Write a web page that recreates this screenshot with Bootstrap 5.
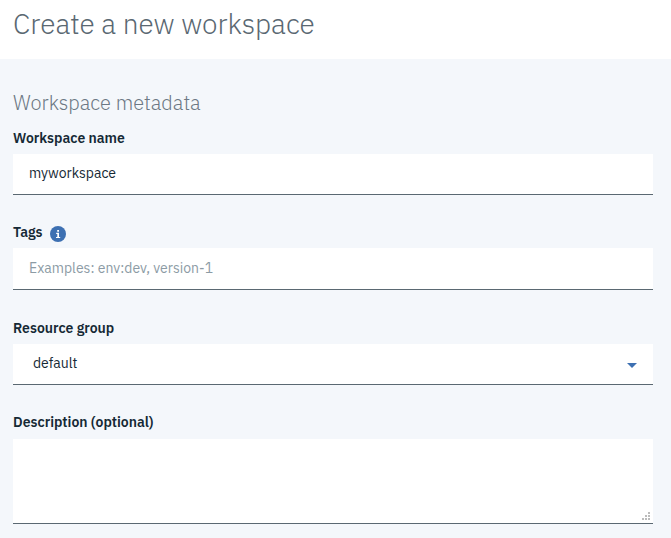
<!DOCTYPE html>
<html lang="en">
<head>
<meta charset="utf-8">
<meta name="viewport" content="width=device-width, initial-scale=1">
<title>Create a new workspace</title>
<link href="https://cdn.jsdelivr.net/npm/bootstrap@5.3.0/dist/css/bootstrap.min.css" rel="stylesheet">
<style>
body{font-family:"IBM Plex Sans",Roboto,"Liberation Sans",sans-serif;font-size:14px;color:#152935;background:#f4f7fb;overflow:hidden}
.page-head{height:59px;padding:7px 13px 0}
.page-title{font-size:28px;line-height:34px;font-weight:300;color:#5a6872}
.form-area{padding:31px 18px 0 13px}
.section-title{font-size:20px;line-height:26px;font-weight:300;color:#6c7884;padding-bottom:12px;height:38px}
.field-stack{gap:27px}
.field-label{font-size:14px;line-height:20px;height:20px;font-weight:600}
.field-box.form-control,.field-box.form-select{height:41px;padding:0 16px 2px;font-size:14px;line-height:20px;color:#152935;background-color:#fff;border:0;border-bottom:1px solid #5a6872}
.field-box::placeholder{color:#8c9ba5;opacity:1}
.field-gap{margin-top:6px}
.group-field{padding-top:1px}
.desc-gap{margin-top:7px}
.field-box.tags-box{height:42px;padding-bottom:1px}
.field-box.group-box{padding-left:20px;background-image:none}
.field-box.desc-box{height:85px;resize:none}
.tag-label-row{gap:7px}
.info-icon{margin-top:3px}
.caret{right:16px;top:19px}
.grip{right:3px;bottom:4px}
</style>
<script src="https://cdn.jsdelivr.net/npm/bootstrap@5.3.0/dist/js/bootstrap.bundle.min.js"></script>
</head>
<body>
<header class="page-head bg-white"><h1 class="page-title m-0">Create a new workspace</h1></header>
<main class="form-area">
<h2 class="section-title m-0">Workspace metadata</h2>
<form class="field-stack d-flex flex-column">
<div>
<label class="field-label d-block" for="name">Workspace name</label>
<input id="name" class="form-control field-box field-gap rounded-0 shadow-none" type="text" value="myworkspace">
</div>
<div>
<div class="tag-label-row d-flex align-items-center">
<label class="field-label" for="tags">Tags</label>
<svg class="info-icon" width="16" height="16" viewBox="0 0 16 16" aria-hidden="true"><circle cx="8" cy="8" r="8" fill="#3d70b2"/><path d="M7.200 4h1.800v1.700H7.200zM6.200 6.800H9V11h1.200v1.100H6V11h1.300V7.900H6.200z" fill="#fff"/></svg>
</div>
<input id="tags" class="form-control field-box tags-box field-gap rounded-0 shadow-none" type="text" placeholder="Examples: env:dev, version-1">
</div>
<div class="group-field">
<label class="field-label d-block" for="group">Resource group</label>
<div class="position-relative field-gap">
<select id="group" class="form-select field-box group-box rounded-0 shadow-none"><option>default</option></select>
<svg class="caret position-absolute pe-none" width="10" height="5" viewBox="0 0 10 5" aria-hidden="true"><path d="M0 0h10L5 5z" fill="#3d70b2"/></svg>
</div>
</div>
<div>
<label class="field-label d-block" for="desc">Description (optional)</label>
<div class="position-relative desc-gap">
<textarea id="desc" class="form-control field-box desc-box rounded-0 shadow-none"></textarea>
<svg class="grip position-absolute pe-none" width="8" height="8" viewBox="0 0 8 8" aria-hidden="true"><path d="M6 0h2v2H6zM3 3h2v2H3zM6 3h2v2H6zM0 6h2v2H0zM3 6h2v2H3zM6 6h2v2H6z" fill="#bcbcbc"/></svg>
</div>
</div>
</form>
</main>
</body>
</html>
